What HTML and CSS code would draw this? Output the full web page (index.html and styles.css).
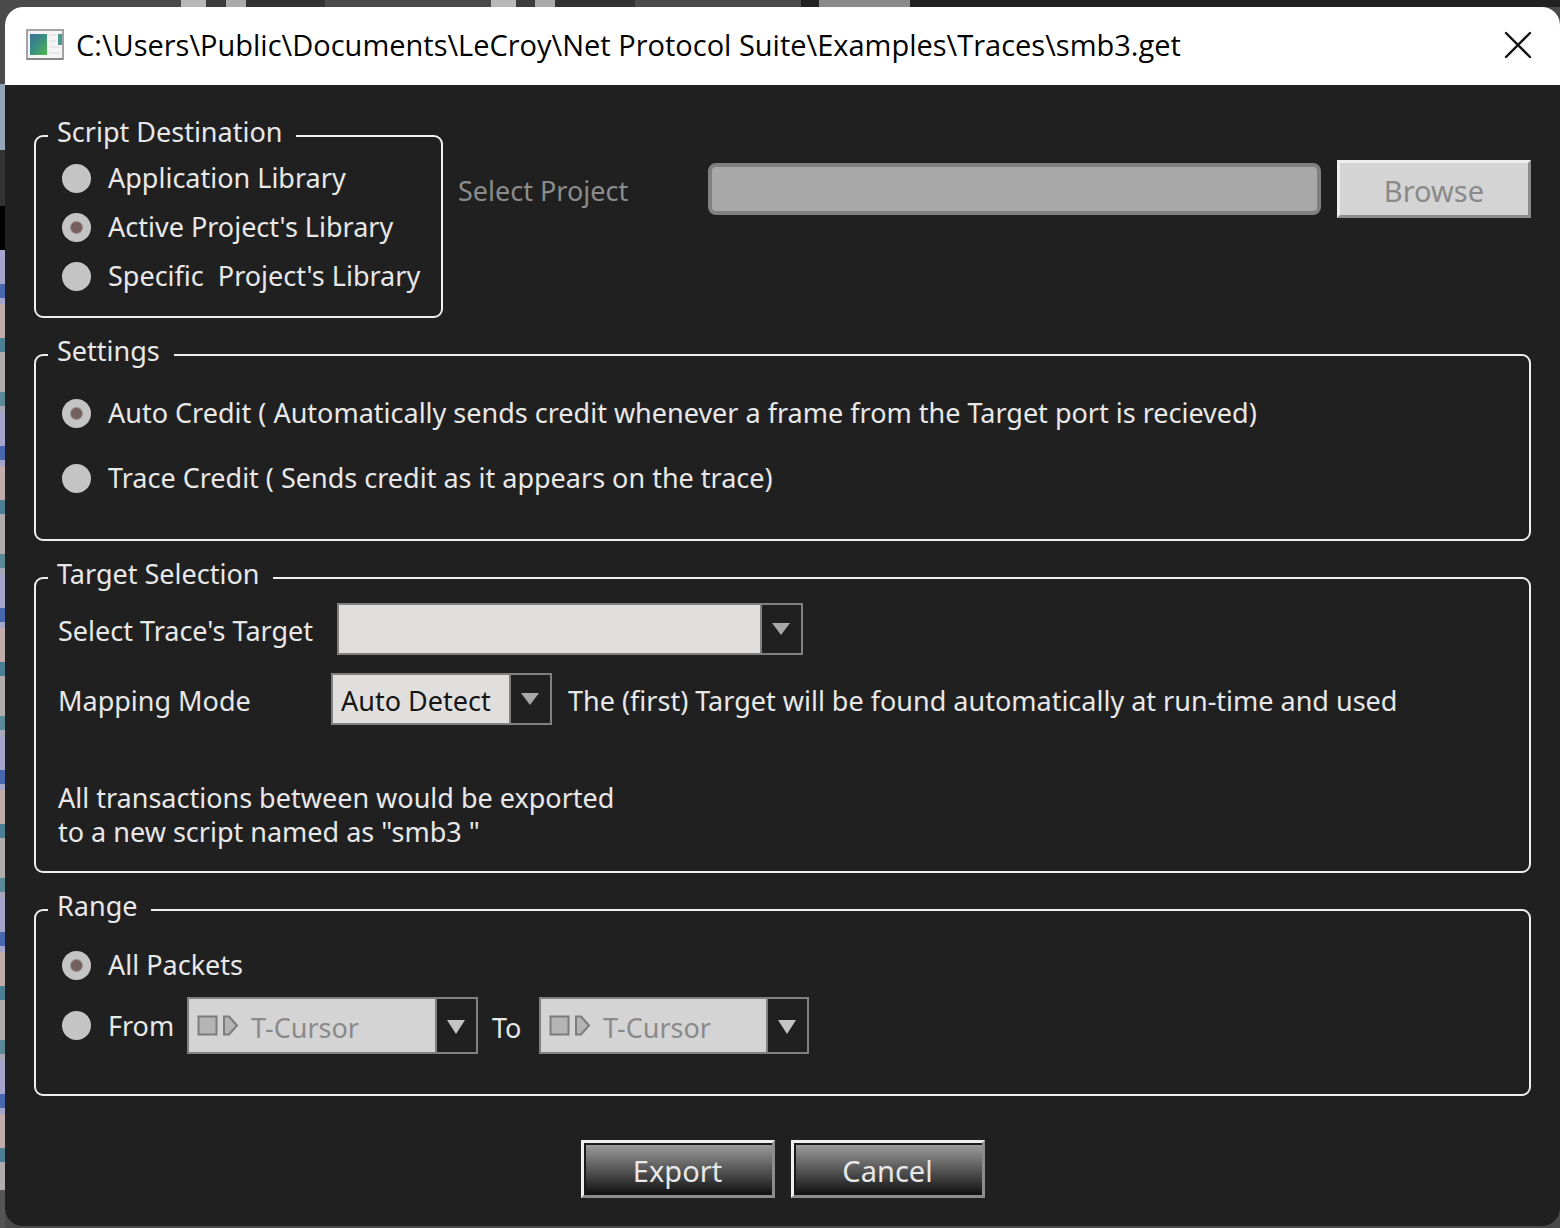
FILE: index.html
```html
<!DOCTYPE html>
<html lang="en">
<head>
    <meta charset="UTF-8">
    <meta name="viewport" content="width=device-width, initial-scale=1.0">
    <title>Export Script</title>
    <link rel="stylesheet" href="styles.css">
</head>
<body>
    <div class="dialog">
        <header class="titlebar">
            <svg class="app-icon" width="38" height="32" viewBox="0 0 38 32" aria-hidden="true">
                <defs>
                    <linearGradient id="screen" x1="0" y1="0" x2="1" y2="1">
                        <stop offset="0" stop-color="#3d6f9c"/>
                        <stop offset="0.5" stop-color="#3a9080"/>
                        <stop offset="1" stop-color="#4fb848"/>
                    </linearGradient>
                </defs>
                <rect x="1" y="1" width="36" height="29" fill="#f4f4f4" stroke="#a3a3a8" stroke-width="2"/>
                <path d="M1 30h36" stroke="#85858a" stroke-width="2"/>
                <rect x="4" y="5" width="17" height="21" fill="url(#screen)"/>
                <path d="M23 6h7M23 12h7M23 18h11M23 24h11" stroke="#dcdcdc" stroke-width="1"/>
                <path d="M32 5h4v11h-4z" fill="#4a9a90"/>
            </svg>
            <h1>C:\Users\Public\Documents\LeCroy\Net Protocol Suite\Examples\Traces\smb3.get</h1>
            <button class="close" type="button" aria-label="Close">
                <svg width="28" height="28" viewBox="0 0 28 28" aria-hidden="true">
                    <path d="M2 2l24 24M26 2l-24 24" stroke="#111" stroke-width="2.400" stroke-linecap="round"/>
                </svg>
            </button>
        </header>

        <form class="content">
            <div class="top">
                <fieldset class="group destination">
                    <legend>Script Destination</legend>
                    <label class="option"><input type="radio" name="destination">Application Library</label>
                    <label class="option"><input type="radio" name="destination" checked>Active Project's Library</label>
                    <label class="option"><input type="radio" name="destination">Specific&nbsp; Project's Library</label>
                </fieldset>
                <div class="project">
                    <label for="project">Select Project</label>
                    <input id="project" type="text" disabled>
                    <button class="btn" type="button" disabled>Browse</button>
                </div>
            </div>

            <fieldset class="group settings">
                <legend>Settings</legend>
                <label class="option"><input type="radio" name="credit" checked>Auto Credit ( Automatically sends credit whenever a frame from the Target port is recieved)</label>
                <label class="option"><input type="radio" name="credit">Trace Credit ( Sends credit as it appears on the trace)</label>
            </fieldset>

            <fieldset class="group target">
                <legend>Target Selection</legend>
                <div class="row">
                    <label class="text trace-label" for="trace">Select Trace's Target</label>
                    <span class="combo wide">
                        <select id="trace"><option></option></select>
                        <svg class="arrow" width="20" height="12" viewBox="0 0 20 12" aria-hidden="true"><path d="M1 0h18l-9 12z" fill="#a8a8a8"/></svg>
                    </span>
                </div>
                <div class="row">
                    <label class="text mode-label" for="mode">Mapping Mode</label>
                    <span class="combo mode">
                        <select id="mode"><option>Auto Detect</option></select>
                        <svg class="arrow" width="20" height="12" viewBox="0 0 20 12" aria-hidden="true"><path d="M1 0h18l-9 12z" fill="#a8a8a8"/></svg>
                    </span>
                    <span class="text">The (first) Target will be found automatically at run-time and used</span>
                </div>
                <p class="summary">All transactions between would be exported<br>to a new script named as "smb3 "</p>
            </fieldset>

            <fieldset class="group range">
                <legend>Range</legend>
                <label class="option"><input type="radio" name="range" checked>All Packets</label>
                <div class="row">
                    <label class="option"><input type="radio" name="range">From</label>
                    <span class="combo cursor from">
                        <select aria-label="From cursor" disabled><option>T-Cursor</option></select>
                        <svg class="marker" width="42" height="22" viewBox="0 0 42 22" aria-hidden="true">
                            <path d="M1.500 1.500h18v18h-18zM27 1.500h5l8 9-8 9h-5z" fill="#b4b4b4" stroke="#7c7c7c" stroke-width="2"/>
                        </svg>
                        <svg class="arrow" width="20" height="14" viewBox="0 0 20 14" aria-hidden="true"><path d="M1 0h18l-9 14z" fill="#c4c4c4"/></svg>
                    </span>
                    <label class="text to-label" for="to">To</label>
                    <span class="combo cursor to">
                        <select id="to" disabled><option>T-Cursor</option></select>
                        <svg class="marker" width="42" height="22" viewBox="0 0 42 22" aria-hidden="true">
                            <path d="M1.500 1.500h18v18h-18zM27 1.500h5l8 9-8 9h-5z" fill="#b4b4b4" stroke="#7c7c7c" stroke-width="2"/>
                        </svg>
                        <svg class="arrow" width="20" height="14" viewBox="0 0 20 14" aria-hidden="true"><path d="M1 0h18l-9 14z" fill="#c4c4c4"/></svg>
                    </span>
                </div>
            </fieldset>

            <div class="actions">
                <button class="btn" type="button">Export</button>
                <button class="btn" type="button">Cancel</button>
            </div>
        </form>
    </div>
</body>
</html>
```

FILE: styles.css
```css
* {
    box-sizing: border-box;
}

/* the edges of the application window behind the dialog */
body {
    margin: 0;
    min-height: 100vh;
    padding: 7px 0 2px 5px;
    font-family: "Noto Sans", sans-serif;
    font-size: 27px;
    line-height: 34px;
    color: #e8e8e8;
    background:
        linear-gradient(to right, transparent 181px, #b8b8b8 181px 206px, #3c3c3c 206px 226px, #aaa 226px 246px, #333 246px 325px, transparent 325px 491px, #b8b8b8 491px 516px, #3c3c3c 516px 535px, #aaa 535px 555px, #333 555px 635px, transparent 635px 801px, #222 801px 819px, #8a8a8a 819px 910px, #222 910px) 0 0 / 100% 7px no-repeat,
        linear-gradient(#4a4a4a 84px, #93a6b8 84px 150px, #333 150px 206px, #000 206px 250px, transparent 250px 1190px, #555 1190px) 0 0 / 5px 100% no-repeat,
        repeating-linear-gradient(#a6a6cc 0 34px, #4a68b0 34px 48px, #a6a6cc 48px 54px, #c2abab 54px 88px, #4d7f94 88px 102px, #b0acac 102px 142px, #5a8a98 142px 156px, #a8a8b8 156px 162px) 0 250px / 5px 100% no-repeat,
        #4a4a4a;
}

.dialog {
    min-height: calc(100vh - 9px);
    border-radius: 18px;
    overflow: hidden;
    background-color: #202020;
}

.titlebar {
    display: flex;
    align-items: center;
    gap: 12px;
    height: 78px;
    padding: 0 28px 3px 21px;
    background-color: #fff;
    color: #000;
}

.titlebar h1 {
    flex: 1;
    margin: 0;
    font-family: "Open Sans", sans-serif;
    font-size: 29px;
    font-weight: normal;
}

.app-icon {
    flex: none;
}

.close {
    display: flex;
    padding: 0;
    border: none;
    background: none;
}

.content {
    display: flex;
    flex-direction: column;
    gap: 17px;
    padding: 31px 29px 28px 29px;
}

.top {
    display: flex;
    gap: 15px;
}

.group {
    display: flex;
    flex-direction: column;
    margin: 0;
    min-width: 0;
    border: 2px solid #eee;
    border-radius: 9px;
}

.group legend {
    margin-left: -10px;
    padding: 0 14px 8px 9px;
    line-height: 32px;
}

.destination {
    width: 409px;
    gap: 15px;
    padding: 5px 0 23px 26px;
}

.settings {
    gap: 31px;
    padding: 21px 26px 44px;
}

.target {
    gap: 18px;
    padding: 5px 22px 22px;
}

.range {
    gap: 15px;
    padding: 18px 26px 40px;
}

.destination legend,
.settings legend,
.range legend {
    margin-left: -14px;
}

.option {
    display: flex;
    align-items: center;
    gap: 17px;
}

.option input {
    appearance: none;
    flex: none;
    width: 29px;
    height: 29px;
    margin: 0;
    border-radius: 50%;
    background-color: #c4c4c4;
}

.option input:checked {
    background: radial-gradient(circle, #75605f 5px, #c4c4c4 7px);
}

.project {
    flex: 1;
    display: flex;
    align-items: center;
    align-self: flex-start;
    gap: 16px;
    padding-top: 44px;
}

.project label {
    width: 234px;
    padding-top: 4px;
    color: #8c8c8c;
}

.project input {
    flex: 1;
    min-width: 0;
    height: 52px;
    border: 4px solid #808080;
    border-radius: 8px;
    background-color: #a8a8a8;
}

.row {
    display: flex;
    align-items: center;
    gap: 16px;
}

.row .text {
    padding-top: 4px;
}

.trace-label {
    width: 263px;
}

.mode-label {
    width: 257px;
}

.combo {
    position: relative;
    display: flex;
}

.combo select {
    appearance: none;
    width: 100%;
    height: 52px;
    padding: 4px 42px 0 8px;
    border: 2px solid #808080;
    border-radius: 0;
    background: linear-gradient(to left, #202020 39px, #808080 39px 41px, #e0dfde 41px);
    font: inherit;
    color: #151515;
}

.wide {
    width: 466px;
}

.mode {
    width: 221px;
}

.range .row {
    gap: 12px;
}

.range .row .option {
    width: 113px;
}

.to-label {
    width: 37px;
    padding-left: 2px;
}

.combo.cursor select {
    height: 57px;
    padding-left: 62px;
    background: linear-gradient(to left, #202020 39px, #808080 39px 41px, #d4d4d4 41px);
    color: #8a8a8a;
    opacity: 1;
}

.from {
    width: 291px;
}

.to {
    width: 270px;
}

.arrow {
    position: absolute;
    top: 50%;
    right: 12px;
    margin-top: -6px;
    pointer-events: none;
}

.marker {
    position: absolute;
    top: 18px;
    left: 10px;
    pointer-events: none;
}

.summary {
    margin: 38px 0 0;
}

.actions {
    display: flex;
    justify-content: center;
    gap: 16px;
    margin-top: 27px;
}

.btn {
    width: 194px;
    height: 58px;
    padding: 4px 0 0;
    border: 3px solid;
    border-color: #eee #8c8c8c #8c8c8c #eee;
    background: linear-gradient(#a0a0a0, #101010);
    box-shadow: inset 2px 2px 0 #1a1a1a;
    font: inherit;
    font-size: 29px;
    color: #e8e8e8;
}

.btn:disabled {
    background: #d4d4d4;
    box-shadow: none;
    color: #8a8a8a;
}
```
